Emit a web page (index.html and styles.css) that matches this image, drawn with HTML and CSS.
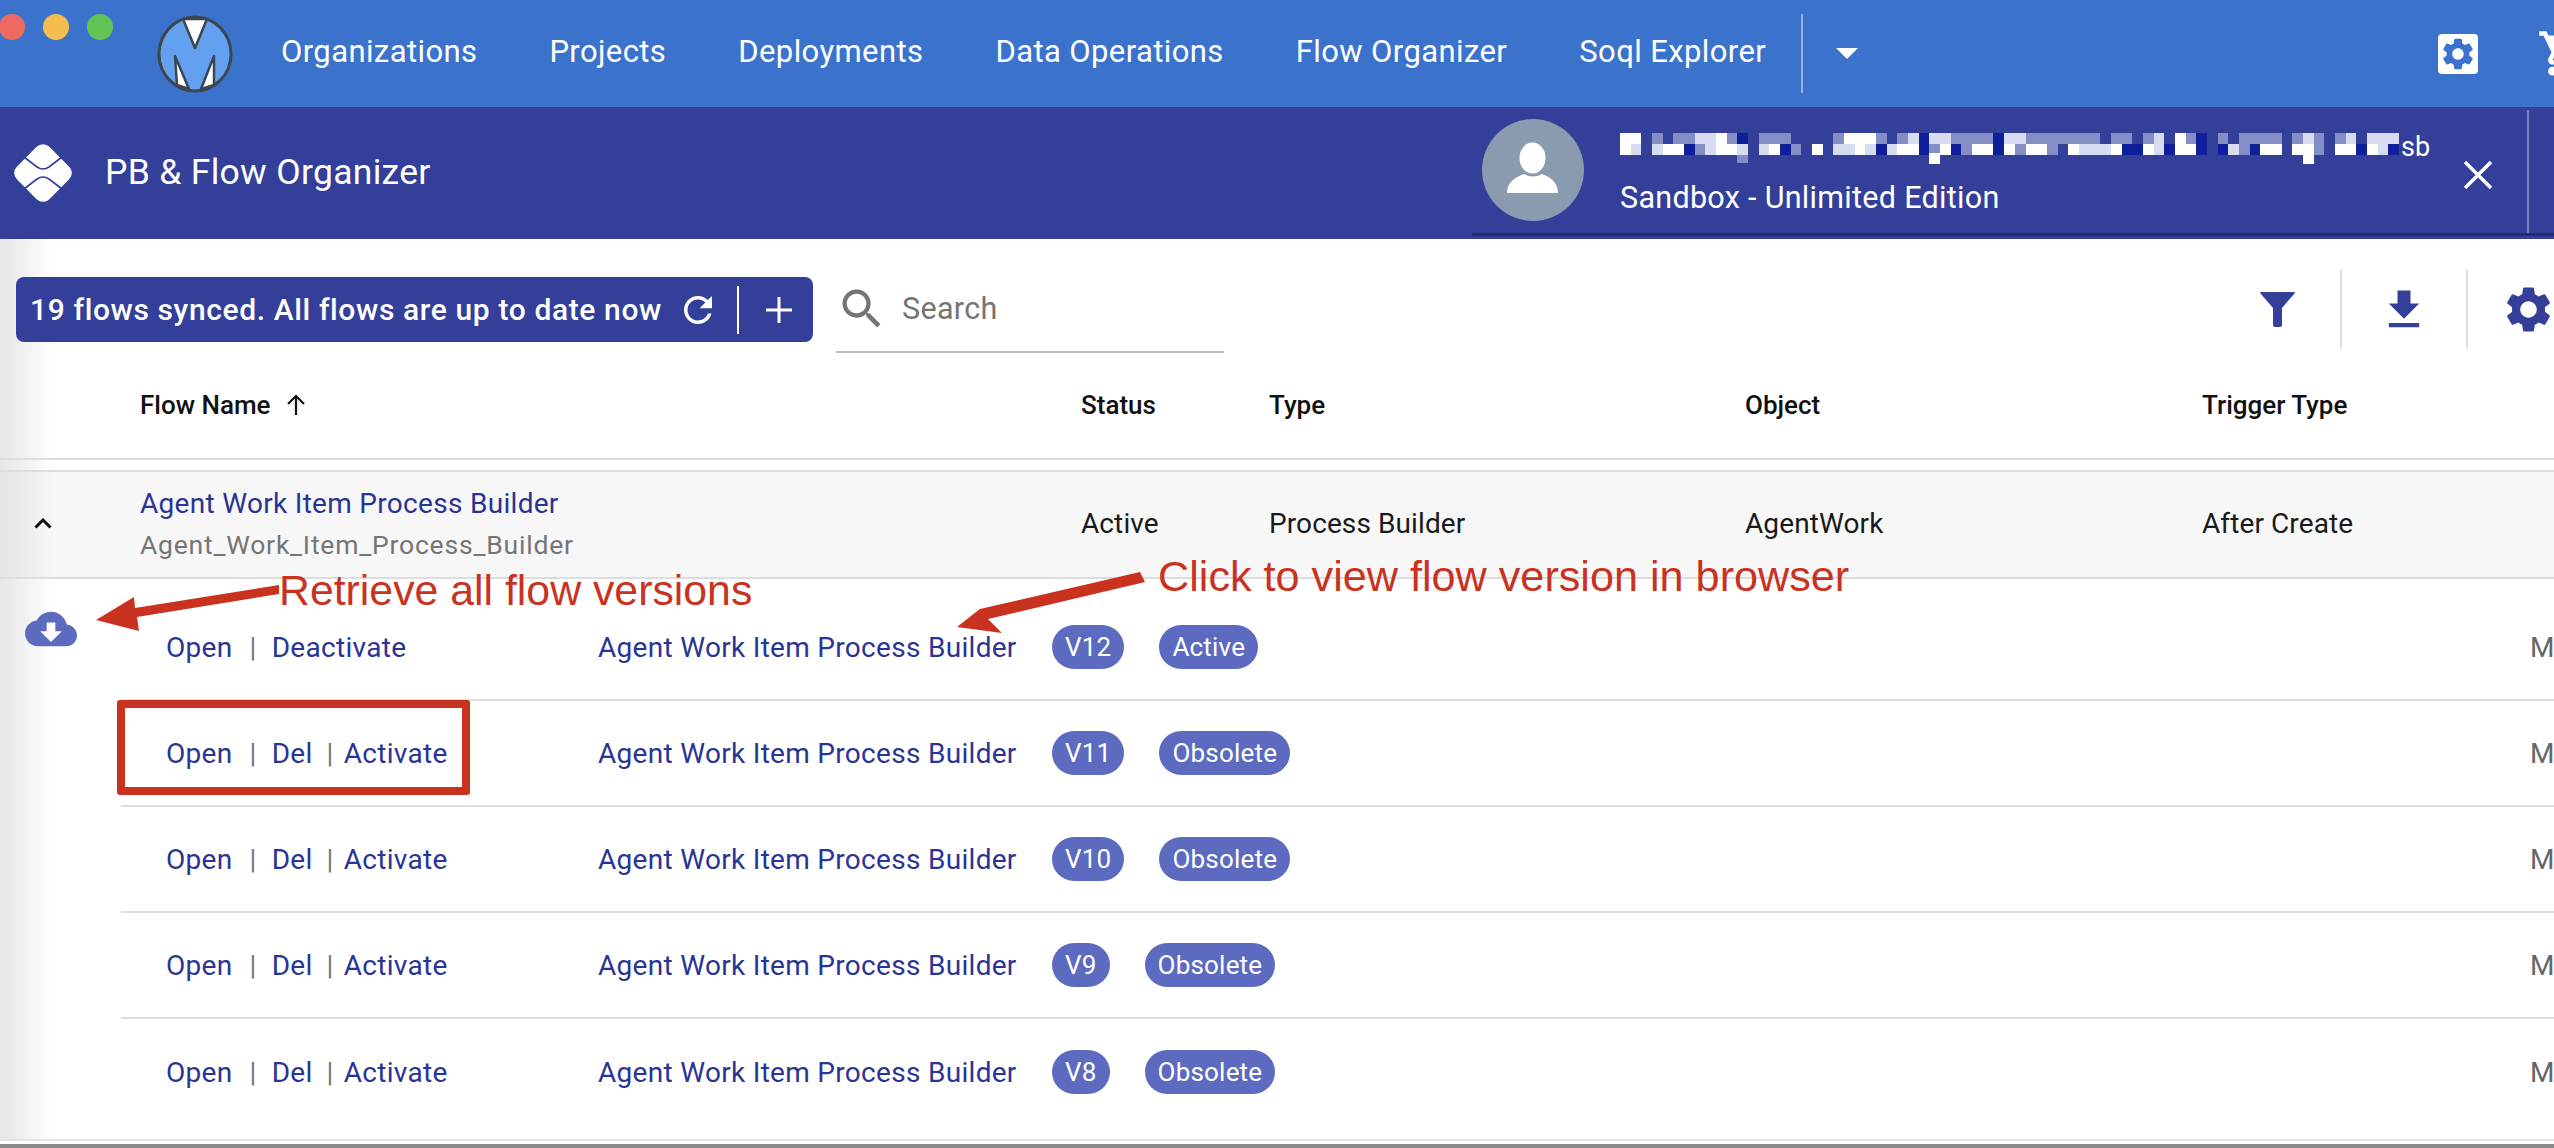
FILE: index.html
```html
<!DOCTYPE html>
<html>
<head>
  <meta charset="utf-8">
  <link rel="stylesheet" href="styles.css">
</head>
<body>
  <div class="app">
    <div class="topbar">
      <div class="dots">
        <span class="dot red"></span>
        <span class="dot yellow"></span>
        <span class="dot green"></span>
      </div>
      <svg class="logo-m" viewBox="0 0 76 78">
        <ellipse cx="38" cy="39" rx="36" ry="37" fill="#64a0f0" stroke="#3c4650" stroke-width="3"/>
        <path d="M26 4H50L38 33Z" fill="#fff" stroke="#3c4650" stroke-width="2.5" stroke-linejoin="round"/>
        <path d="M18 41L32 74 20 70Z" fill="#fff" stroke="#3c4650" stroke-width="2.5" stroke-linejoin="round"/>
        <path d="M57 41V70L44 74Z" fill="#fff" stroke="#3c4650" stroke-width="2.5" stroke-linejoin="round"/>
      </svg>
      <div class="nav">
        <a>Organizations</a>
        <a>Projects</a>
        <a>Deployments</a>
        <a>Data Operations</a>
        <a>Flow Organizer</a>
        <a>Soql Explorer</a>
      </div>
      <div class="nav-rule"></div>
      <div class="nav-caret"></div>
      <div class="nav-settings">
        <svg viewBox="0 0 24 24"><path fill="#3b73cc" d="M19.14 12.94c.04-.3.06-.61.06-.94 0-.32-.02-.64-.07-.94l2.03-1.58c.18-.14.23-.41.12-.61l-1.92-3.32c-.12-.22-.37-.29-.59-.22l-2.39.96c-.5-.38-1.03-.7-1.62-.94l-.36-2.54c-.04-.24-.24-.41-.48-.41h-3.84c-.24 0-.43.17-.47.41l-.36 2.54c-.59.24-1.13.57-1.62.94l-2.39-.96c-.22-.08-.47 0-.59.22L2.74 8.87c-.12.21-.08.47.12.61l2.03 1.58c-.05.3-.09.63-.09.94s.02.64.07.94l-2.03 1.58c-.18.14-.23.41-.12.61l1.92 3.32c.12.22.37.29.59.22l2.39-.96c.5.38 1.03.7 1.62.94l.36 2.54c.05.24.24.41.48.41h3.84c.24 0 .44-.17.47-.41l.36-2.54c.59-.24 1.13-.56 1.62-.94l2.39.96c.22.08.47 0 .59-.22l1.92-3.32c.12-.22.07-.47-.12-.61l-2.01-1.58zM12 15.6c-1.98 0-3.6-1.62-3.6-3.6s1.62-3.6 3.6-3.6 3.6 1.62 3.6 3.6-1.62 3.6-3.6 3.6z"/></svg>
      </div>
      <svg class="nav-cart" viewBox="0 0 24 24"><path fill="#fff" d="M7 18c-1.1 0-1.99.9-1.99 2S5.9 22 7 22s2-.9 2-2-.9-2-2-2zM1 2v2h2l3.6 7.59-1.35 2.45c-.16.28-.25.61-.25.96 0 1.1.9 2 2 2h12v-2H7.42c-.14 0-.25-.11-.25-.25l.03-.12.9-1.78h7.45c.75 0 1.41-.41 1.75-1.03l3.58-6.47c.08-.14.12-.31.12-.48 0-.55-.45-1-1-1H5.21l-.94-2H1zm16 16c-1.1 0-1.99.9-1.99 2s.89 2 1.99 2 2-.9 2-2-.9-2-2-2z"/></svg>
    </div>

    <div class="subbar">
      <svg class="logo-app" viewBox="0 0 60 60">
        <rect x="7" y="7" width="46" height="46" rx="9" fill="#fff" transform="rotate(45 30 30)"/>
        <path d="M11 14L24 24Q30 28 36 24L49 14M11 46L24 36Q30 32 36 36L49 46" fill="none" stroke="#333f99" stroke-width="1.6"/>
      </svg>
      <h1>PB &amp; Flow Organizer</h1>
      <div class="org">
        <svg class="avatar" viewBox="0 0 102 102">
          <circle cx="51" cy="51" r="51" fill="#8a9bb0"/>
          <ellipse cx="50.500" cy="39" rx="13" ry="15.500" fill="#fff"/>
          <path d="M25 74C25 62 36 57 42 55Q51 60 60 55C66 57 76 62 76 74Z" fill="#fff"/>
        </svg>
        <div class="org-text">
          <div class="org-name">
            <svg class="mosaic" viewBox="0 0 73 3" preserveAspectRatio="none" shape-rendering="crispEdges" fill="none" stroke-width="1">
              <path stroke="#858dc6" d="M3 .5h1M5 .5h2M10 .5h1M13 .5h3M20 .5h1M24 .5h1M26 .5h1M31 .5h4M38 .5h7M46 .5h2M49 .5h1M53 .5h1M56 .5h1M58 .5h4M63 .5h1M65 .5h1M67 .5h1M7 1.500h1M16 1.500h1M29 1.500h1M32 1.500h1M37 1.500h1M40 1.500h1M58 1.500h1M65 1.500h1M11 2.200h1"/>
              <path stroke="#d8dcf0" d="M7 .5h2M27 .5h1M29 .5h2M36 .5h2M50 .5h1M64 .5h1M68 .5h1M70 .5h3M1 1.500h1M3 1.500h1M8 1.500h1M11 1.500h1M13 1.500h1M20 1.500h2M23 1.500h1M25 1.500h1M43 1.500h3M50 1.500h1M57 1.500h1M71 1.500h1"/>
              <path stroke="#0f1f9a" d="M11 .5h1M28 .5h1M35 .5h1M54 .5h1M6 1.500h1M15 1.500h1M24 1.500h1M28 1.500h1M31 1.500h1M35 1.500h1M47 1.500h2M51 1.500h1M54 1.500h1M56 1.500h1M59 1.500h1M69 1.500h1M72 1.500h1"/>
              <path stroke="#fff" d="M0 .5h2M9 .5h1M21 .5h3M52 .5h1M0 1.500h1M4 1.500h2M9 1.500h2M14 1.500h1M18 1.500h1M22 1.500h1M26 1.500h2M30 1.500h1M33 1.500h2M36 1.500h1M38 1.500h2M42 1.500h1M46 1.500h1M49 1.500h1M52 1.500h2M60 1.500h2M63 1.500h2M67 1.500h2M70 1.500h1M29 2.300h1M64 2.300h1"/>
            </svg>
            <span>sb</span>
          </div>
          <div class="org-edition">Sandbox - Unlimited Edition</div>
        </div>
        <svg class="org-close" viewBox="0 0 30 30"><path d="M2 2L28 28M28 2L2 28" stroke="#fff" stroke-width="3.500" fill="none"/></svg>
        <div class="org-rule"></div>
      </div>
    </div>

    <div class="content">
      <div class="toolbar">
        <div class="sync">
          <span class="sync-text">19 flows synced. All flows are up to date now</span>
          <svg class="sync-refresh" viewBox="0 0 24 24"><path fill="#fff" d="M17.65 6.35C16.2 4.9 14.21 4 12 4c-4.42 0-7.99 3.58-7.99 8s3.57 8 7.99 8c3.73 0 6.84-2.55 7.73-6h-2.08c-.82 2.33-3.04 4-5.65 4-3.31 0-6-2.69-6-6s2.69-6 6-6c1.66 0 3.14.69 4.22 1.78L13 11h7V4l-2.35 2.35z"/></svg>
          <span class="sync-rule"></span>
          <svg class="sync-plus" viewBox="0 0 26 26"><path d="M13 0V26M0 13H26" stroke="#fff" stroke-width="3"/></svg>
        </div>
        <div class="search">
          <svg viewBox="0 0 24 24"><path fill="#757575" d="M15.500 14h-.79l-.28-.27C15.410 12.590 16 11.110 16 9.500 16 5.910 13.090 3 9.500 3S3 5.910 3 9.500 5.910 16 9.500 16c1.610 0 3.090-.59 4.230-1.570l.27.28v.79l5 4.990L20.490 19l-4.990-5zm-6 0C7.010 14 5 11.990 5 9.500S7.010 5 9.500 5 14 7.010 14 9.500 11.990 14 9.500 14z"/></svg>
          <span>Search</span>
        </div>
        <div class="tools">
          <div class="tool">
            <svg class="tool-filter" viewBox="0 0 35 35"><path fill="#333f99" d="M1 0H34Q35.500 0 34.500 1.500L22 16V33Q22 35 20 35H15Q13 35 13 33V16L.5 1.500Q-.5 0 1 0Z"/></svg>
          </div>
          <div class="tool tool-border">
            <svg class="tool-icon" viewBox="0 0 24 24"><path fill="#333f99" d="M19 9h-4V3H9v6H5l7 7 7-7zM5 18v2h14v-2H5z"/></svg>
          </div>
          <div class="tool tool-border tool-last">
            <svg class="tool-gear" viewBox="0 0 24 24"><path fill="#333f99" d="M19.14 12.94c.04-.3.06-.61.06-.94 0-.32-.02-.64-.07-.94l2.03-1.58c.18-.14.23-.41.12-.61l-1.92-3.32c-.12-.22-.37-.29-.59-.22l-2.39.96c-.5-.38-1.03-.7-1.62-.94l-.36-2.54c-.04-.24-.24-.41-.48-.41h-3.84c-.24 0-.43.17-.47.41l-.36 2.54c-.59.24-1.13.57-1.62.94l-2.39-.96c-.22-.08-.47 0-.59.22L2.74 8.87c-.12.21-.08.47.12.61l2.03 1.58c-.05.3-.09.63-.09.94s.02.64.07.94l-2.03 1.58c-.18.14-.23.41-.12.61l1.92 3.32c.12.22.37.29.59.22l2.39-.96c.5.38 1.03.7 1.62.94l.36 2.54c.05.24.24.41.48.41h3.84c.24 0 .44-.17.47-.41l.36-2.54c.59-.24 1.13-.56 1.62-.94l2.39.96c.22.08.47 0 .59-.22l1.92-3.32c.12-.22.07-.47-.12-.61l-2.01-1.58zM12 15.600c-1.980 0-3.600-1.620-3.600-3.600s1.620-3.600 3.600-3.600 3.600 1.620 3.600 3.600-1.620 3.600-3.600 3.600z"/></svg>
          </div>
        </div>
      </div>

      <div class="grid head">
        <div></div>
        <div class="head-name">Flow Name
          <svg viewBox="0 0 20 22"><path d="M10 21V2M2 10L10 2L18 10" stroke="#111" stroke-width="2.200" fill="none"/></svg>
        </div>
        <div>Status</div>
        <div>Type</div>
        <div>Object</div>
        <div>Trigger Type</div>
      </div>

      <div class="grid flow">
        <svg class="chevron" viewBox="0 0 18 11"><path d="M1.500 9.500L9 2L16.500 9.500" stroke="#111" stroke-width="3" fill="none"/></svg>
        <div>
          <div class="flow-title">Agent Work Item Process Builder</div>
          <div class="flow-api">Agent_Work_Item_Process_Builder</div>
        </div>
        <div>Active</div>
        <div>Process Builder</div>
        <div>AgentWork</div>
        <div>After Create</div>
      </div>

      <div class="versions">
        <div class="version">
          <div class="actions"><a>Open</a><span class="sep">|</span><a>Deactivate</a></div>
          <a class="version-name">Agent Work Item Process Builder</a>
          <div class="badges"><span class="badge">V12</span><span class="badge">Active</span></div>
          <span class="clip">M</span>
        </div>
        <div class="version">
          <div class="actions"><a>Open</a><span class="sep">|</span><a>Del</a><span class="sep sep-tight">|</span><a>Activate</a></div>
          <a class="version-name">Agent Work Item Process Builder</a>
          <div class="badges"><span class="badge">V11</span><span class="badge">Obsolete</span></div>
          <span class="clip">M</span>
        </div>
        <div class="version">
          <div class="actions"><a>Open</a><span class="sep">|</span><a>Del</a><span class="sep sep-tight">|</span><a>Activate</a></div>
          <a class="version-name">Agent Work Item Process Builder</a>
          <div class="badges"><span class="badge">V10</span><span class="badge">Obsolete</span></div>
          <span class="clip">M</span>
        </div>
        <div class="version">
          <div class="actions"><a>Open</a><span class="sep">|</span><a>Del</a><span class="sep sep-tight">|</span><a>Activate</a></div>
          <a class="version-name">Agent Work Item Process Builder</a>
          <div class="badges"><span class="badge">V9</span><span class="badge">Obsolete</span></div>
          <span class="clip">M</span>
        </div>
        <div class="version version-end">
          <div class="actions"><a>Open</a><span class="sep">|</span><a>Del</a><span class="sep sep-tight">|</span><a>Activate</a></div>
          <a class="version-name">Agent Work Item Process Builder</a>
          <div class="badges"><span class="badge">V8</span><span class="badge">Obsolete</span></div>
          <span class="clip">M</span>
        </div>
      </div>
      <div class="foot"></div>

      <svg class="cloud" viewBox="0 0 24 24"><path fill="#5c6bc0" fill-rule="evenodd" d="M19.350 10.040C18.670 6.590 15.640 4 12 4 9.110 4 6.600 5.640 5.350 8.040 2.340 8.360 0 10.910 0 14c0 3.310 2.690 6 6 6h13c2.760 0 5-2.240 5-5 0-2.640-2.050-4.780-4.650-4.960zM17 13l-5 5-5-5h3V9h4v4h3z"/></svg>
    </div>

    <!-- red markup drawn on top of the screenshot -->
    <svg class="arrows" viewBox="0 0 2554 1148">
      <path fill="#c9321f" d="M279 585L279 594L137 617L139 631L96 620L134 597L135 608Z"/>
      <path fill="#c9321f" d="M1140 572L1145 582L988 619L1002 633L957 627L990 601L980 609Z"/>
    </svg>
    <div class="note note-left">Retrieve all flow versions</div>
    <div class="note note-right">Click to view flow version in browser</div>
    <div class="note-box"></div>
  </div>
</body>
</html>
```

FILE: styles.css
```css
* {
  box-sizing: border-box;
}

body {
  margin: 0;
  font-family: Roboto, sans-serif;
  background-color: #fff;
}

.app {
  position: relative;
  width: 2554px;
  height: 1148px;
  overflow: hidden;
  display: flex;
  flex-direction: column;
}

/* top blue bar */
.topbar {
  height: 107px;
  flex: none;
  display: flex;
  align-items: center;
  background-color: #3b73cc;
  color: white;
}

.dots {
  display: flex;
  gap: 18px;
  align-self: flex-start;
  margin: 14px 0 0 -1px;
}

.dot {
  width: 26px;
  height: 26px;
  border-radius: 50%;
}

.red { background-color: #ee6a5f; }
.yellow { background-color: #f5bd4f; }
.green { background-color: #61c454; }

.logo-m {
  width: 76px;
  height: 78px;
  margin-left: 44px;
}

.nav {
  display: flex;
  gap: 72px;
  margin: 0 0 5px 48px;
  font-size: 31px;
  letter-spacing: 0.4px;
}

.nav-rule {
  width: 2px;
  height: 79px;
  margin-left: 35px;
  background-color: #8fb0e3;
}

.nav-caret {
  width: 0;
  height: 0;
  margin-left: 33px;
  border-left: 11px solid transparent;
  border-right: 11px solid transparent;
  border-top: 11px solid white;
}

.nav-settings {
  width: 40px;
  height: 40px;
  margin-left: auto;
  background-color: white;
  border-radius: 4px;
  display: flex;
  align-items: center;
  justify-content: center;
}

.nav-settings svg {
  width: 38px;
  height: 38px;
}

.nav-cart {
  width: 53px;
  height: 53px;
  flex: none;
  margin: 0 -36px 0 59px;
}

/* app header */
.subbar {
  height: 132px;
  flex: none;
  display: flex;
  align-items: center;
  background-color: #333f99;
  color: white;
}

.logo-app {
  width: 60px;
  height: 60px;
  margin-left: 13px;
}

h1 {
  margin: 0 0 3px 32px;
  font-size: 35.5px;
  font-weight: 400;
  letter-spacing: 0.3px;
}

.org {
  width: 1082px;
  height: 129px;
  margin-left: auto;
  align-self: flex-start;
  padding-left: 10px;
  display: flex;
  align-items: center;
  border-bottom: 3px solid #252a70;
}

.avatar {
  width: 102px;
  height: 102px;
  flex: none;
}

.org-text {
  margin-left: 36px;
  display: flex;
  flex-direction: column;
  gap: 14px;
  padding-top: 8px;
}

.org-name {
  display: flex;
  align-items: center;
  height: 33px;
  font-size: 27px;
}

.mosaic {
  width: 779px;
  height: 33px;
  flex: none;
}

.org-name span {
  margin: -5px 0 0 2px;
}

.org-edition {
  font-size: 30.5px;
  letter-spacing: 0.3px;
}

.org-close {
  width: 30px;
  height: 30px;
  margin: 10px 34px 0 auto;
  flex: none;
}

.org-rule {
  width: 2px;
  height: 123px;
  margin-right: 25px;
  align-self: flex-end;
  background-color: #7a82bb;
}

/* page body */
.content {
  position: relative;
  flex: 1;
  display: flex;
  flex-direction: column;
  background: linear-gradient(90deg, #e6e6e6, #fff 55px);
}

.toolbar {
  height: 121px;
  flex: none;
  display: flex;
  align-items: flex-start;
  padding-left: 16px;
}

.sync {
  width: 797px;
  height: 65px;
  margin-top: 38px;
  padding-left: 14px;
  display: flex;
  align-items: center;
  background-color: #333f99;
  border-radius: 8px;
  color: white;
}

.sync-text {
  width: 636px;
  font-size: 30px;
  font-weight: 500;
  letter-spacing: 0.62px;
  white-space: nowrap;
}

.sync-refresh {
  width: 42px;
  height: 42px;
  margin-left: 11px;
  flex: none;
}

.sync-rule {
  width: 2px;
  height: 48px;
  margin-left: 18px;
  background-color: white;
}

.sync-plus {
  width: 26px;
  height: 26px;
  margin-left: 27px;
}

.search {
  width: 388px;
  height: 83px;
  margin: 31px 0 0 23px;
  padding-bottom: 4px;
  display: flex;
  align-items: center;
  border-bottom: 2px solid #bdbdbd;
  font-size: 30.5px;
  color: #757575;
}

.search svg {
  width: 52px;
  height: 52px;
  flex: none;
}

.search span {
  margin-left: 14px;
  letter-spacing: 0.3px;
}

.tools {
  display: flex;
  margin: 31px 0 0 auto;
}

.tool {
  width: 126px;
  height: 79px;
  display: flex;
  align-items: center;
  justify-content: center;
}

.tool-border {
  border-left: 2px solid #dedede;
}

.tool-last {
  width: 88px;
  justify-content: flex-start;
  padding-left: 33px;
}

.tool-filter {
  width: 35px;
  height: 35px;
}

.tool-icon {
  width: 52px;
  height: 52px;
}

.tool-gear {
  width: 55px;
  height: 55px;
  flex: none;
}

/* table */
.grid {
  display: grid;
  grid-template-columns: 140px 941px 188px 476px 457px 1fr;
  align-items: center;
  flex: none;
}

.head {
  height: 100px;
  padding-bottom: 8px;
  border-bottom: 2px solid #ddd;
  font-size: 26px;
  font-weight: 500;
  color: #111;
}

.head-name {
  display: flex;
  align-items: center;
  gap: 15px;
}

.head-name svg {
  width: 20px;
  height: 22px;
}

.flow {
  height: 109px;
  margin-top: 10px;
  padding-bottom: 2px;
  border-top: 2px solid #ddd;
  border-bottom: 2px solid #ddd;
  background: linear-gradient(90deg, #e4e4e4, #f7f7f7 55px);
  font-size: 28px;
  letter-spacing: 0.1px;
  color: #1a1a1a;
}

.chevron {
  width: 18px;
  height: 11px;
  margin-left: 34px;
}

.flow-title {
  color: #2a3494;
  letter-spacing: 0.3px;
}

.flow-api {
  margin-top: 9px;
  font-size: 26.5px;
  color: #757575;
  letter-spacing: 0.8px;
}

.versions {
  padding-top: 16px;
  margin-left: 121px;
}

.version {
  height: 106px;
  padding-left: 45px;
  display: flex;
  align-items: center;
  border-bottom: 2px solid #ddd;
  font-size: 28px;
  color: #2a3494;
}

.version-end {
  border-bottom: none;
}

.actions {
  width: 432px;
  display: flex;
  letter-spacing: 0.3px;
}

.sep {
  margin: 0 15px 0 17px;
  color: #777;
}

.sep-tight {
  margin: 0 10px 0 14px;
}

.version-name {
  width: 454px;
  letter-spacing: 0.3px;
}

.badges {
  display: flex;
  gap: 35px;
}

.badge {
  height: 44px;
  padding: 0 13px;
  display: flex;
  align-items: center;
  background-color: #5c6bc0;
  border-radius: 22px;
  font-size: 26px;
  letter-spacing: 0.2px;
  color: white;
}

.clip {
  width: 24px;
  margin-left: auto;
  overflow: hidden;
  color: #666;
}

.foot {
  margin-top: auto;
  height: 9px;
  border-top: 2px solid #e4e4e4;
  background: linear-gradient(#fff 3px, #8a8a8a 3px);
}

.cloud {
  position: absolute;
  left: 25px;
  top: 364px;
  width: 52px;
  height: 52px;
}

/* annotations */
.arrows {
  position: absolute;
  left: 0;
  top: 0;
  width: 2554px;
  height: 1148px;
  pointer-events: none;
}

.note {
  position: absolute;
  font-family: "Liberation Sans", sans-serif;
  line-height: 48px;
  color: #c9321f;
  white-space: nowrap;
}

.note-left {
  left: 279px;
  top: 566px;
  font-size: 42.8px;
}

.note-right {
  left: 1158px;
  top: 552px;
  font-size: 43.2px;
}

.note-box {
  position: absolute;
  left: 117px;
  top: 700px;
  width: 353px;
  height: 95px;
  border: 8px solid #c9321f;
  border-radius: 3px;
}
```
